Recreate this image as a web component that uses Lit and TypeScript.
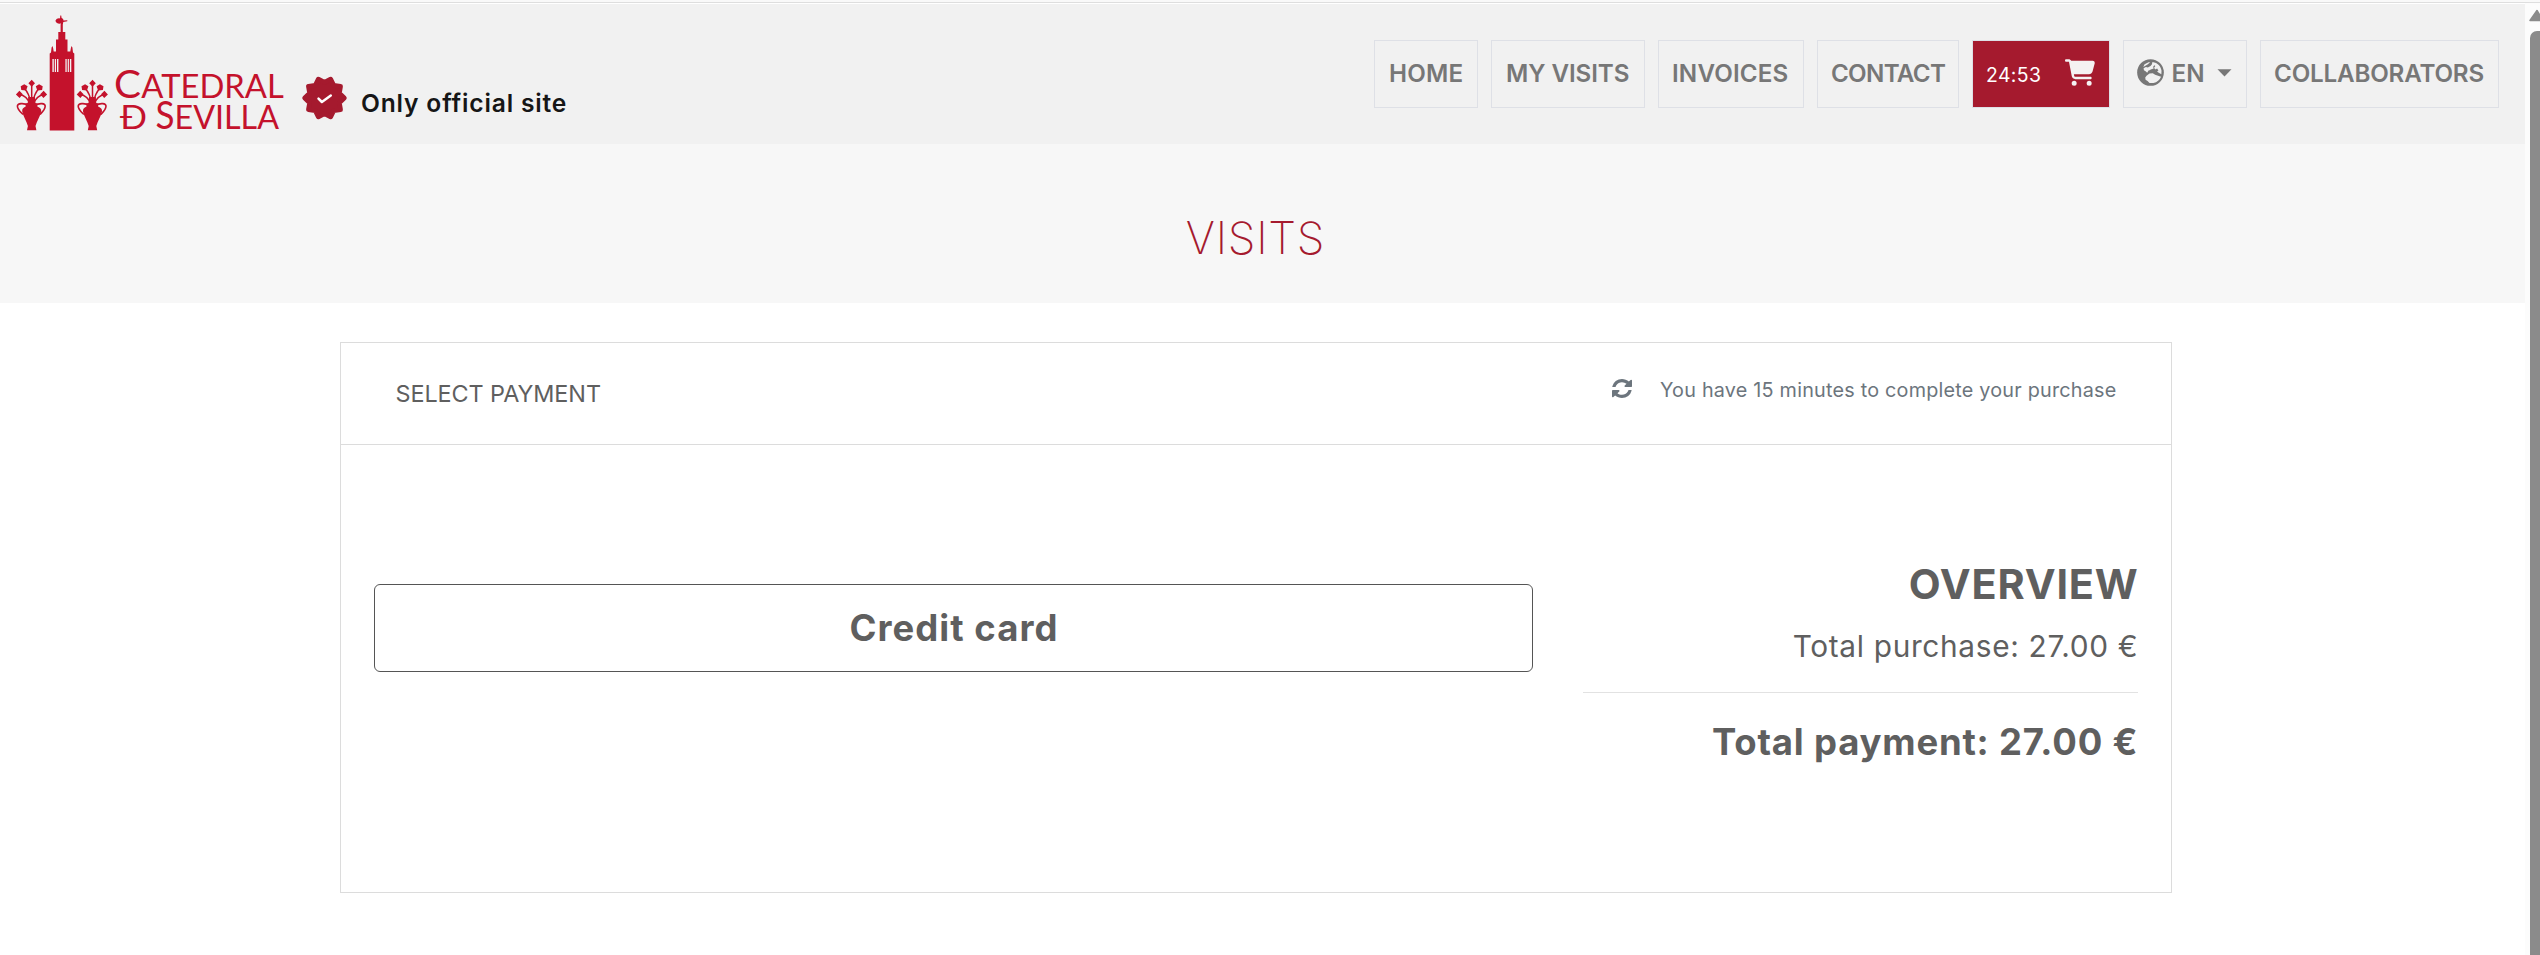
import { LitElement, html, svg, css } from "lit";
import { classMap } from "lit/directives/class-map.js";

interface NavItem {
  label: string;
  cls: string;
}

const NAV: NavItem[] = [
  { label: "HOME", cls: "home" },
  { label: "MY VISITS", cls: "my" },
  { label: "INVOICES", cls: "invoices" },
  { label: "CONTACT", cls: "contact" },
];

/* Ten-lobed seal outline centred on the origin. */
const seal = Array.from({ length: 20 }, (_, i) => {
  const r = i % 2 === 0 ? 19.8 : 15.6;
  const a = (i * Math.PI) / 10;
  return `${(r * Math.cos(a)).toFixed(2)},${(r * Math.sin(a)).toFixed(2)}`;
}).join(" ");

const vase = (dx: number) => svg`
  <g transform="translate(${dx} 0)">
    <g stroke="#c4122c" stroke-width="1.5" fill="none">
      <path d="M31.7 104V84M31 104C30 97 28 92 24 88M32.400 104C33.400 97 35.400 92 39.400 88M30 104C28 99 25 95.500 19.600 94.600M33.400 104C35.400 99 38.400 95.500 43.800 94.600"/>
      <path d="M29 105.200C23 102.600 17.600 103.400 17.400 106C17.400 109.500 20.500 112 23 114.500M34.400 105.200C40.400 102.600 45 103.400 45.200 106C45.200 109.500 42.500 112 40 114.500" stroke-width="1.6"/>
    </g>
    <g fill="#c4122c">
      <path d="M31.700 79.800l3.300 3.500-3.300 3.400-3.300-3.400zM24.300 84.200l3.300 2-1.500 4.300-4.800-.6-.6-3.600zM39.100 84.200l-3.300 2 1.500 4.300 4.800-.6.6-3.600zM19.400 90.800l3.400 3.500-3.200 3.800-3.700-3.600zM43.600 90.800l-3.400 3.500 3.200 3.800 3.700-3.600z"/>
      <path d="M28.200 97h6.800l.5 6.500h-7.800z"/>
      <path d="M25.500 103.400q6 -2 12 0l-.2 3.200q4.300 1.600 3.900 4.800c-1.200 5-4.200 9.300-5.700 14.600l.9 4.300h-9.400l.9-4.300c-1.500-5.300-4.500-9.600-5.700-14.600q-.4-3.200 3.500-4.800z"/>
    </g>
  </g>`;

class AppRoot extends LitElement {
  static styles = css`
    :host { display: flex; flex-direction: column; height: 955px; background: #fff; overflow: hidden; font-family: Inter, sans-serif; color: #5f5f5f; }
    * { box-sizing: border-box; }
    svg { display: block; flex: none; }
    h1, h2, h3, p { margin: 0; font-weight: 400; white-space: nowrap; }
    .strip { height: 4px; flex: none; background: #fff; border-top: 2px solid #f9f9f9; }
    .strip::before { content: ""; display: block; height: 1px; background: #dedede; }
    .window { display: flex; flex: 1; min-height: 0; }
    .page { width: 2525px; flex: none; }
    .header { height: 140px; display: flex; align-items: flex-start; background: #f1f1f1; }
    .seal { margin: 71px 0 0 .5px; }
    .official { margin: 84px 0 0 13.500px; font-size: 24.600px; font-weight: 600; line-height: 30px; letter-spacing: .820px; color: #161616; }
    .nav { display: flex; gap: 13px; margin: 36px 26px 0 auto; }
    .item { height: 68px; border: 1px solid #dee0e6; padding-left: 14px; display: flex; align-items: center; font-size: 24.200px; font-weight: 600; line-height: 30px; color: #777; white-space: nowrap; padding-bottom: 1px; }
    .home { width: 104px; letter-spacing: .15px; }
    .my { width: 154px; letter-spacing: -.08px; }
    .invoices { width: 146px; letter-spacing: .16px; padding-left: 13px; }
    .contact { width: 142px; letter-spacing: -.7px; padding-left: 13px; }
    .cart { width: 138px; background: #a51a2e; background-clip: padding-box; color: #fff; padding: 2px 14px 0 13px; font-size: 19.400px; font-weight: 400; letter-spacing: .38px; justify-content: space-between; }
    .cart svg { margin-top: -6px; }
    .lang { width: 124px; padding-left: 13px; }
    .lang .code { margin-left: 7.500px; letter-spacing: .15px; }
    .lang .globe { margin-top: -2px; }
    .lang .caret { margin-left: 12.500px; margin-top: -2px; }
    .collab { width: 239px; letter-spacing: -.19px; padding-left: 13px; }
    .band { height: 159px; background: #f7f7f7; padding: 66px 14px 0 0; }
    .band h1 { text-align: center; font-size: 44.400px; font-weight: 200; line-height: 56px; letter-spacing: .76px; color: #a51a2e; }
    .card { width: 1832px; height: 551px; margin: 39px 0 0 340px; border: 1px solid #dcdcdc; background: #fff; }
    .cardhead { height: 102px; border-bottom: 1px solid #dcdcdc; display: flex; justify-content: space-between; align-items: flex-start; padding: 0 54.500px 0 54.500px; }
    .cardhead h2 { margin-top: 35.500px; font-size: 23.400px; line-height: 30px; letter-spacing: -.08px; }
    .note { margin-top: 31.500px; display: flex; align-items: center; color: #6c757d; font-size: 19.800px; line-height: 30px; letter-spacing: .22px; }
    .note svg { margin: -3px 27.500px 0 0; }
    .body { display: flex; padding: 139px 33px 0 33px; align-items: flex-start; }
    .pay { width: 1159px; height: 88px; border: 1px solid #555; border-radius: 6px; background: #fff; color: #5f5f5f; font: 700 36.500px/44px Inter, sans-serif; letter-spacing: 1.030px; padding: 0 4px 1px 5px; }
    .overview { width: 555px; margin: -22px 0 0 50px; text-align: right; }
    .overview h2 { font-size: 41.400px; font-weight: 700; line-height: 44px; letter-spacing: .8px; margin-right: -.5px; }
    .overview p { font-size: 29.800px; line-height: 36px; letter-spacing: .68px; margin: 22px -.3px 0 0; }
    .rule { height: 1px; background: #e2e2e2; margin-top: 28px; }
    .overview h3 { font-size: 36.500px; font-weight: 700; line-height: 44px; letter-spacing: .8px; margin: 27px -.3px 0 0; }
    .scroll { flex: 1; background: #fcfcfc; padding: 6px 0 0 4px; margin-top: -1px; overflow: hidden; }
    .thumb { width: 16px; height: 940px; margin: 9px 0 0 1px; border-radius: 7px; background: #8b8b8b; }
  `;

  render() {
    return html`
      <div class="strip"></div>
      <div class="window">
        <div class="page">
          <header class="header">
            <svg width="300" height="140" viewBox="0 4 300 140">
              ${vase(0)}${vase(60.8)}
              <path fill="#c4122c" fill-rule="evenodd" d="M49.700 130.400V53.500L51 52.500 51.600 47.500 52.300 46 53 47.500 53.700 51.500H56V39.500H58.300V32H60.600V24.500L61 23.600C57.500 24 55.500 22.500 55.500 20.500C56.500 18.500 58.500 18 60 18.500L60.300 15.500H61.200L61.600 18C63 18.600 63.500 19.500 63.500 20.500L67.300 20.200V21.200L63.300 22 62.800 24.500V32H65.300V39.500H67.500V51.500H70.300L71 47.500 71.700 46 72.400 47.500 73 52.500 74.300 53.500V130.400ZM52.400 59V72H53.800V59ZM54.800 59V72H56V59ZM57 59V72H58.400V59ZM65.400 59V72H66.700V59ZM67.700 59V72H68.900V59ZM69.900 59V72H71.300V59Z"/>
              <g fill="#c4122c" font-family="Lato, sans-serif">
                <text x="114" y="97.600" font-size="38.500" textLength="27" lengthAdjust="spacingAndGlyphs">C</text>
                <text x="141.300" y="97.600" font-size="33.500" textLength="142.500" lengthAdjust="spacingAndGlyphs">ATEDRAL</text>
                <text x="120" y="129.300" font-size="33.500" textLength="27" lengthAdjust="spacingAndGlyphs">Ð</text>
                <text x="155.500" y="129.300" font-size="38.500" textLength="19" lengthAdjust="spacingAndGlyphs">S</text>
                <text x="174.500" y="129.300" font-size="33.500" textLength="104.500" lengthAdjust="spacingAndGlyphs">EVILLA</text>
              </g>
            </svg>
            <svg class="seal" width="47" height="46" viewBox="-23.500 -23 47 46">
              <polygon points=${seal} fill="#a51a2e" stroke="#a51a2e" stroke-width="4.800" stroke-linejoin="round"/>
              <path d="M-6 .6L-2.600 4L6.300 -2.400" fill="none" stroke="#fff" stroke-width="2.500" stroke-linecap="round" stroke-linejoin="round"/>
            </svg>
            <p class="official">Only official site</p>
            <nav class="nav">
              ${NAV.map((n) => html`<div class=${classMap({ item: true, [n.cls]: true })}>${n.label}</div>`)}
              <div class="item cart">
                <span>24:53</span>
                <svg width="30" height="27" viewBox="0 0 576 512">
                  <path fill="#f5f1f2" d="M0 24C0 10.700 10.700 0 24 0H69.500c22 0 41.500 12.800 50.600 32h411c26.300 0 45.500 25 38.600 50.400l-41 152.300c-8.500 31.400-37 53.300-69.500 53.300H170.700l5.400 28.500c2.200 11.300 12.100 19.500 23.600 19.500H488c13.300 0 24 10.700 24 24s-10.700 24-24 24H199.700c-34.600 0-64.300-24.600-70.700-58.500L77.400 54.500c-.7-3.800-4-6.500-7.900-6.500H24C10.700 48 0 37.300 0 24zM128 464a48 48 0 1 1 96 0 48 48 0 1 1-96 0zm336-48a48 48 0 1 1 0 96 48 48 0 1 1 0-96z"/>
                </svg>
              </div>
              <div class="item lang">
                <svg class="globe" width="27" height="27" viewBox="65 40 82 82">
                  <circle cx="106" cy="81" r="40.500" fill="#777"/>
                  <path fill="#f1f1f1" d="M112 49C128 51 138 63 139.500 76L139 86L131 82L126 78L130 75L126 69L121 72L117 67L108 73L100 75L96 82L91 77L86 74L85 68L92 64L98 66L106 61L110 57ZM88 56L100 50L105 50L97 57L88 62L84 64ZM94 91L103 84L113 83L120 88L129 91L138 94C134 104 126 111 115 113L103 113L97 107L91 103L90 96Z"/>
                  <path stroke="#777" stroke-width="4" fill="none" d="M106 74L116 73L124 76M119 60L115 66"/>
                </svg>
                <span class="code">EN</span>
                <svg class="caret" width="15" height="8" viewBox="0 0 15 8"><path d="M.5 .3H14.500L7.500 7.600Z" fill="#777"/></svg>
              </div>
              <div class="item collab">COLLABORATORS</div>
            </nav>
          </header>
          <section class="band"><h1>VISITS</h1></section>
          <main class="card">
            <div class="cardhead">
              <h2>SELECT PAYMENT</h2>
              <div class="note">
                <svg width="20" height="19" viewBox="0 0 1536 1536" preserveAspectRatio="none">
                  <path fill="#6c757d" d="M1511 928q0 5-1 7-64 268-268 434.500t-478 166.500q-146 0-282.500-55t-243.500-157l-129 129q-19 19-45 19t-45-19-19-45v-448q0-26 19-45t45-19h448q26 0 45 19t19 45-19 45l-137 137q71 66 161 102t187 36q134 0 250-65t186-179q11-17 53-117 8-23 30-23h192q13 0 22.500 9.500t9.500 22.500zm25-800v448q0 26-19 45t-45 19h-448q-26 0-45-19t-19-45 19-45l138-138q-148-137-349-137-134 0-250 65t-186 179q-11 17-53 117-8 23-30 23h-199q-13 0-22.500-9.500t-9.500-22.500v-7q65-268 270-434.500t480-166.500q146 0 284 55.500t245 156.500l130-129q19-19 45-19t45 19 19 45z"/>
                </svg>
                <p>You have 15 minutes to complete your purchase</p>
              </div>
            </div>
            <div class="body">
              <button class="pay">Credit card</button>
              <section class="overview">
                <h2>OVERVIEW</h2>
                <p>Total purchase: 27.00 €</p>
                <div class="rule"></div>
                <h3>Total payment: 27.00 €</h3>
              </section>
            </div>
          </main>
        </div>
        <div class="scroll">
          <svg width="11" height="13" viewBox="0 0 11 13"><path d="M8 1.500L14 11.500H1Z" fill="#8b8b8b" stroke="#8b8b8b" stroke-width="1.500" stroke-linejoin="round"/></svg>
          <div class="thumb"></div>
        </div>
      </div>`;
  }
}
customElements.define("app-root", AppRoot);
